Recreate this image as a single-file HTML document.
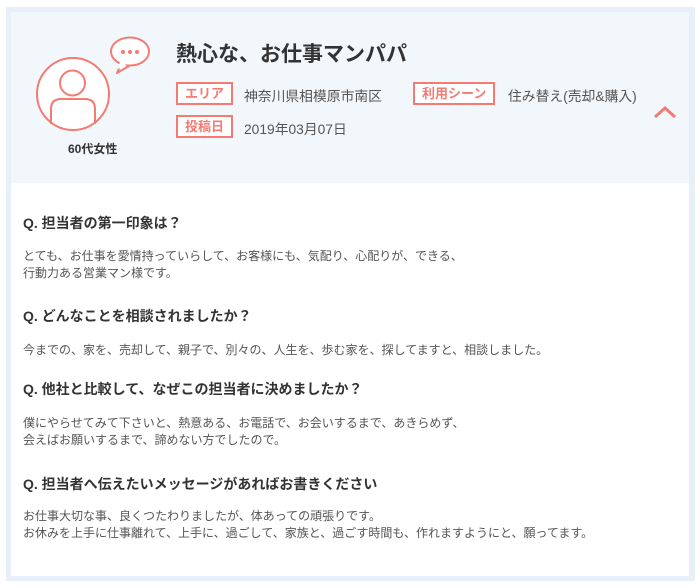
<!DOCTYPE html>
<html><head><meta charset="utf-8"><style>
*{margin:0;padding:0;box-sizing:border-box}
body{width:700px;height:588px;background:#fff;font-family:"Liberation Sans","Noto Sans CJK JP",sans-serif;position:relative}
.outer{position:absolute;left:6px;top:7px;width:689px;height:574px;background:#e7f0f8}
.inner{position:absolute;left:5px;top:5px;width:678px;height:564px;background:#fff}
.head{position:absolute;left:0;top:0;width:678px;height:171px;background:#f2f7fb}
.abs{position:absolute;white-space:nowrap}
.title{left:165px;top:26px;font-size:21px;font-weight:bold;color:#333}
.tag{border:2px solid #f47a72;background:#fff;color:#f47a72;font-size:13px;font-weight:bold;height:23px;line-height:19px;padding:0 7px}
.val{font-size:13.8px;color:#555}
.q{left:12px;font-size:14px;font-weight:bold;color:#333}
.a{left:12px;font-size:12px;color:#555;line-height:17px}
</style></head><body>
<div class="outer"><div class="inner">
<div class="head">
<svg class="abs" style="left:17px;top:16px" width="130" height="110" viewBox="0 0 130 110">
<circle cx="45" cy="66" r="36" fill="#fff" stroke="#f47a72" stroke-width="2"/>
<circle cx="44.5" cy="55" r="12.5" fill="none" stroke="#f47a72" stroke-width="2"/>
<path d="M23 96 V81 Q23 71 33 71 H57 Q67 71 67 81 V96" fill="none" stroke="#f47a72" stroke-width="2"/>
<path d="M93 36 L89 45 L101 38" fill="#fff" stroke="#f47a72" stroke-width="2" stroke-linejoin="round"/>
<ellipse cx="102" cy="23.5" rx="19" ry="14" fill="#fff" stroke="#f47a72" stroke-width="2"/>
<path d="M92 34 L90 41 L99 37 Z" fill="#fff"/>
<circle cx="95" cy="24" r="2" fill="#f47a72"/><circle cx="102" cy="24" r="2" fill="#f47a72"/><circle cx="109" cy="24" r="2" fill="#f47a72"/>
</svg>
<div class="abs" style="left:57px;top:128px;font-size:12px;font-weight:bold;color:#333">60代女性</div>
<div class="abs title">熱心な、お仕事マンパパ</div>
<div class="abs tag" style="left:165px;top:70px">エリア</div>
<div class="abs val" style="left:233px;top:73px">神奈川県相模原市南区</div>
<div class="abs tag" style="left:402px;top:70px">利用シーン</div>
<div class="abs val" style="left:497px;top:73px">住み替え(売却&amp;購入)</div>
<div class="abs tag" style="left:165px;top:103px">投稿日</div>
<div class="abs val" style="left:233px;top:106px">2019年03月07日</div>
<svg class="abs" style="left:641px;top:92px" width="26" height="16"><path d="M3 13 L13 4 L23 13" fill="none" stroke="#f47a72" stroke-width="3"/></svg>
</div>
<div class="abs q" style="top:201px">Q. 担当者の第一印象は？</div>
<div class="abs a" style="top:236px">とても、お仕事を愛情持っていらして、お客様にも、気配り、心配りが、できる、<br>行動力ある営業マン様です。</div>
<div class="abs q" style="top:294px">Q. どんなことを相談されましたか？</div>
<div class="abs a" style="top:330px">今までの、家を、売却して、親子で、別々の、人生を、歩む家を、探してますと、相談しました。</div>
<div class="abs q" style="top:367px">Q. 他社と比較して、なぜこの担当者に決めましたか？</div>
<div class="abs a" style="top:403px">僕にやらせてみて下さいと、熱意ある、お電話で、お会いするまで、あきらめず、<br>会えばお願いするまで、諦めない方でしたので。</div>
<div class="abs q" style="top:462px">Q. 担当者へ伝えたいメッセージがあればお書きください</div>
<div class="abs a" style="top:496px">お仕事大切な事、良くつたわりましたが、体あっての頑張りです。<br>お休みを上手に仕事離れて、上手に、過ごして、家族と、過ごす時間も、作れますようにと、願ってます。</div>
</div></div>
</body></html>
